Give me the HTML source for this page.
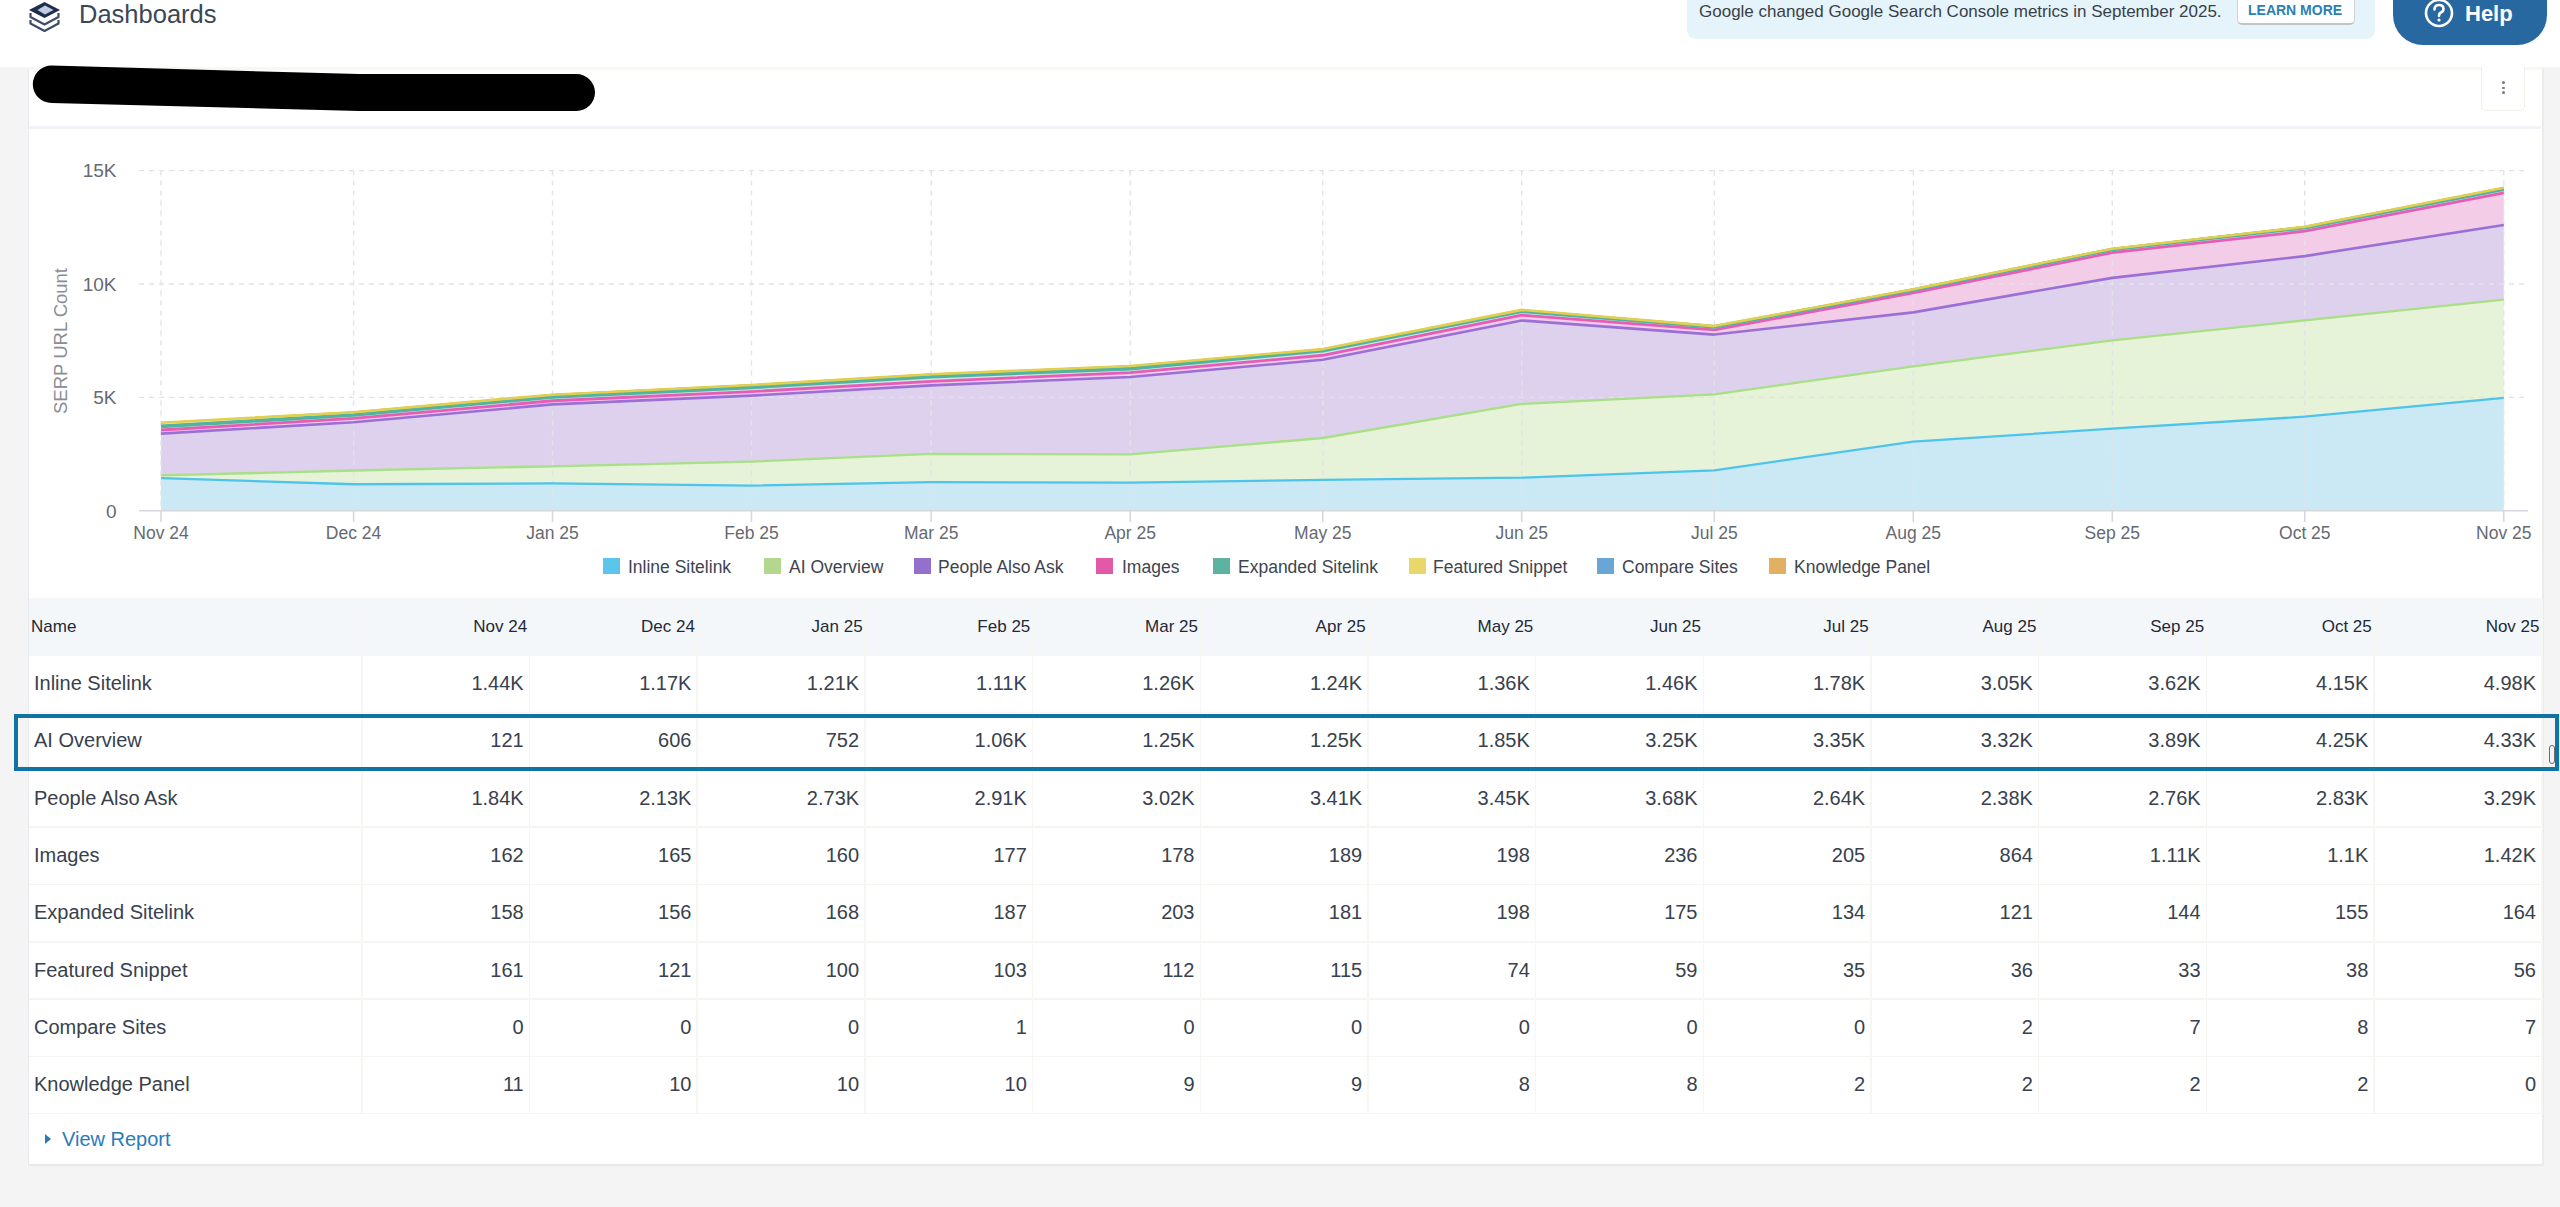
<!DOCTYPE html>
<html><head><meta charset="utf-8"><style>
html,body{margin:0;padding:0}
body{width:2560px;height:1207px;overflow:hidden;background:#f4f4f4;position:relative;font-family:"Liberation Sans",sans-serif;color:#333}
.abs{position:absolute}
#hdr{position:absolute;left:0;top:0;width:2560px;height:67px;background:#fff}
#title{position:absolute;left:79px;top:-3px;font-size:25.5px;line-height:34px;color:#3b4656}
#banner{position:absolute;left:1687px;top:-12px;width:688px;height:51px;background:#e5f3fa;border-radius:9px}
#btxt{position:absolute;left:1699px;top:0px;font-size:17px;line-height:24px;color:#3a3f47;white-space:nowrap}
#learn{position:absolute;left:2237px;top:-6px;width:118px;height:30.5px;background:#fff;border:1px solid #cfd3d8;border-bottom:2px solid #c4c4c4;border-radius:5px;box-sizing:border-box}
#learntxt{position:absolute;left:2248px;top:1px;font-size:14px;line-height:18px;font-weight:bold;color:#2a7fb5;white-space:nowrap}
#help{position:absolute;left:2393px;top:-30px;width:154px;height:75px;background:#2868a0;border-radius:30px}
#helptxt{position:absolute;left:2465px;top:0px;font-size:22px;line-height:28px;font-weight:bold;color:#fff}
#card{position:absolute;left:28px;top:67px;width:2516px;height:1099px;background:#fff;box-sizing:border-box;border:1.5px solid #e9e9f0;border-top:3px solid #f8f8f0;border-right:2px solid #ebebeb;border-bottom:2px solid #e8e8e8}
#sep{position:absolute;left:29px;top:126px;width:2512px;height:3px;background:#f3f3f9}
#kebab{position:absolute;left:2481px;top:67px;width:44px;height:44px;box-sizing:border-box;border:1.5px solid #f0f0ea;border-top:none;border-radius:0 0 5px 5px;background:#fff}
.dot{position:absolute;left:2502px;width:2.6px;height:2.6px;background:#7a7a7a;border-radius:2px}
.chart{position:absolute;left:0;top:0}
.sw{position:absolute;top:558px;width:17px;height:16px}
.lg{position:absolute;top:556px;font-size:17.5px;line-height:22px;color:#3d4450;white-space:nowrap}
.thead{position:absolute;left:29px;width:2512px;background:#f4f7fa;border-top:1.5px solid #f7f7f2;box-sizing:border-box}
.th{position:absolute;font-size:17px;color:#1f2937;white-space:nowrap}
.td{position:absolute;font-size:20px;line-height:54px;height:57px;color:#38414d;white-space:nowrap}
.r{text-align:right}
.rb{position:absolute;left:29px;width:2512px;height:1.5px;background:#f5f5f1}
.cl{position:absolute;width:1.5px;background:#f6f6f3}
#hl{position:absolute;left:14px;top:714px;width:2545px;height:57px;box-sizing:border-box;border:4px solid #0f73a3}
#vr{position:absolute;left:62px;top:1125px;font-size:20px;line-height:28px;color:#2a7bb8}
</style></head><body>
<div id="hdr"></div>
<svg class="abs" style="left:20px;top:0px" width="50" height="40" viewBox="20 0 50 40">
  <path d="M29 10 L44.5 2 L60 10 L44.5 18 Z" fill="#1f2e4d"/>
  <path d="M45 5.5 L53.5 10 L45 14.5 L37.5 10 Z" fill="#c3cde0"/>
  <path d="M30.5 13 L30.5 17 L44.5 24.5 L58.5 17 L58.5 13" fill="none" stroke="#3f4c66" stroke-width="2.2" stroke-linejoin="round"/>
  <path d="M30.5 20 L30.5 23.5 L44.5 31 L58.5 23.5 L58.5 20" fill="none" stroke="#3f4c66" stroke-width="2.2" stroke-linejoin="round"/>
</svg>
<div id="title">Dashboards</div>
<div id="banner"></div>
<div id="btxt">Google changed Google Search Console metrics in September 2025.</div>
<div id="learn"></div>
<div id="learntxt">LEARN MORE</div>
<div id="help"></div>
<svg class="abs" style="left:2423px;top:-3px" width="32" height="32" viewBox="0 0 32 32">
  <circle cx="16" cy="16" r="13" fill="none" stroke="#fff" stroke-width="2.6"/>
  <path d="M11.5 12.5 Q11.5 8 16 8 Q20.5 8 20.5 12 Q20.5 14.5 17.5 15.8 Q16 16.5 16 19" fill="none" stroke="#fff" stroke-width="2.6" stroke-linecap="round"/>
  <circle cx="16" cy="23" r="1.6" fill="#fff"/>
</svg>
<div id="helptxt">Help</div>
<div id="card"></div>
<svg class="abs" style="left:0;top:0" width="620" height="130" viewBox="0 0 620 130">
  <path d="M51.5 65.6 L359 74 L576.5 74 A18.5 18.5 0 0 1 576.5 111 L359 111 L51.5 103 A18.7 18.7 0 0 1 51.5 65.6 Z" fill="#000"/>
</svg>
<div id="kebab"></div>
<div class="dot" style="top:81px"></div><div class="dot" style="top:86.5px"></div><div class="dot" style="top:91px"></div>
<div id="sep"></div>
<svg class="chart" width="2560" height="600" viewBox="0 0 2560 600">
<path d="M161.00,478.14 L353.56,484.26 L552.54,483.36 L751.51,485.63 L931.24,482.22 L1130.21,482.68 L1322.77,479.96 L1521.75,477.69 L1714.31,470.43 L1913.29,441.63 L2112.26,428.70 L2304.82,416.68 L2503.80,397.85 L2503.80,510.80 L2304.82,510.80 L2112.26,510.80 L1913.29,510.80 L1714.31,510.80 L1521.75,510.80 L1322.77,510.80 L1130.21,510.80 L931.24,510.80 L751.51,510.80 L552.54,510.80 L353.56,510.80 L161.00,510.80 Z" fill="#cbe9f4"/><path d="M161.00,475.40 L353.56,470.52 L552.54,466.30 L751.51,461.58 L931.24,453.87 L1130.21,454.33 L1322.77,438.00 L1521.75,403.98 L1714.31,394.45 L1913.29,366.33 L2112.26,340.47 L2304.82,320.29 L2503.80,299.65 L2503.80,397.85 L2304.82,416.68 L2112.26,428.70 L1913.29,441.63 L1714.31,470.43 L1521.75,477.69 L1322.77,479.96 L1130.21,482.68 L931.24,482.22 L751.51,485.63 L552.54,483.36 L353.56,484.26 L161.00,478.14 Z" fill="#e6f3d9"/><path d="M161.00,433.67 L353.56,422.21 L552.54,404.39 L751.51,395.59 L931.24,385.38 L1130.21,376.99 L1322.77,359.75 L1521.75,320.51 L1714.31,334.58 L1913.29,312.35 L2112.26,277.88 L2304.82,256.10 L2503.80,225.03 L2503.80,299.65 L2304.82,320.29 L2112.26,340.47 L1913.29,366.33 L1714.31,394.45 L1521.75,403.98 L1322.77,438.00 L1130.21,454.33 L931.24,453.87 L751.51,461.58 L552.54,466.30 L353.56,470.52 L161.00,475.40 Z" fill="#ddd1ed"/><path d="M161.00,429.99 L353.56,418.47 L552.54,400.76 L751.51,391.57 L931.24,381.34 L1130.21,372.70 L1322.77,355.26 L1521.75,315.16 L1714.31,329.93 L1913.29,292.75 L2112.26,252.70 L2304.82,231.16 L2503.80,192.83 L2503.80,225.03 L2304.82,256.10 L2112.26,277.88 L1913.29,312.35 L1714.31,334.58 L1521.75,320.51 L1322.77,359.75 L1130.21,376.99 L931.24,385.38 L751.51,395.59 L552.54,404.39 L353.56,422.21 L161.00,433.67 Z" fill="#f3cde7"/><path d="M161.00,426.41 L353.56,414.93 L552.54,396.95 L751.51,387.33 L931.24,376.74 L1130.21,368.60 L1322.77,350.77 L1521.75,311.19 L1714.31,326.89 L1913.29,290.01 L2112.26,249.44 L2304.82,227.64 L2503.80,189.11 L2503.80,192.83 L2304.82,231.16 L2112.26,252.70 L1913.29,292.75 L1714.31,329.93 L1521.75,315.16 L1322.77,355.26 L1130.21,372.70 L931.24,381.34 L751.51,391.57 L552.54,400.76 L353.56,418.47 L161.00,429.99 Z" fill="#cfe9e3"/><path d="M161.00,422.76 L353.56,412.19 L552.54,394.68 L751.51,384.99 L931.24,374.20 L1130.21,365.99 L1322.77,349.09 L1521.75,309.86 L1714.31,326.09 L1913.29,289.19 L2112.26,248.69 L2304.82,226.78 L2503.80,187.84 L2503.80,189.11 L2304.82,227.64 L2112.26,249.44 L1913.29,290.01 L1714.31,326.89 L1521.75,311.19 L1322.77,350.77 L1130.21,368.60 L931.24,376.74 L751.51,387.33 L552.54,396.95 L353.56,414.93 L161.00,426.41 Z" fill="#f7f0c8"/><path d="M161.00,422.76 L353.56,412.19 L552.54,394.68 L751.51,384.97 L931.24,374.20 L1130.21,365.99 L1322.77,349.09 L1521.75,309.86 L1714.31,326.09 L1913.29,289.15 L2112.26,248.53 L2304.82,226.60 L2503.80,187.68 L2503.80,187.84 L2304.82,226.78 L2112.26,248.69 L1913.29,289.19 L1714.31,326.09 L1521.75,309.86 L1322.77,349.09 L1130.21,365.99 L931.24,374.20 L751.51,384.99 L552.54,394.68 L353.56,412.19 L161.00,422.76 Z" fill="#d3e4f2"/><path d="M161.00,422.51 L353.56,411.96 L552.54,394.45 L751.51,384.74 L931.24,373.99 L1130.21,365.78 L1322.77,348.91 L1521.75,309.67 L1714.31,326.05 L1913.29,289.10 L2112.26,248.48 L2304.82,226.55 L2503.80,187.68 L2503.80,187.68 L2304.82,226.60 L2112.26,248.53 L1913.29,289.15 L1714.31,326.09 L1521.75,309.86 L1322.77,349.09 L1130.21,365.99 L931.24,374.20 L751.51,384.97 L552.54,394.68 L353.56,412.19 L161.00,422.76 Z" fill="#f6e6cc"/>
<line x1="139" y1="397.4" x2="2528" y2="397.4" stroke="#e2e3e7" stroke-width="1.4" stroke-dasharray="5,5"/><line x1="139" y1="284.0" x2="2528" y2="284.0" stroke="#e2e3e7" stroke-width="1.4" stroke-dasharray="5,5"/><line x1="139" y1="170.6" x2="2528" y2="170.6" stroke="#e2e3e7" stroke-width="1.4" stroke-dasharray="5,5"/><line x1="161.0" y1="170.6" x2="161.0" y2="510.8" stroke="#e2e3e7" stroke-width="1.4" stroke-dasharray="5,5"/><line x1="353.6" y1="170.6" x2="353.6" y2="510.8" stroke="#e2e3e7" stroke-width="1.4" stroke-dasharray="5,5"/><line x1="552.5" y1="170.6" x2="552.5" y2="510.8" stroke="#e2e3e7" stroke-width="1.4" stroke-dasharray="5,5"/><line x1="751.5" y1="170.6" x2="751.5" y2="510.8" stroke="#e2e3e7" stroke-width="1.4" stroke-dasharray="5,5"/><line x1="931.2" y1="170.6" x2="931.2" y2="510.8" stroke="#e2e3e7" stroke-width="1.4" stroke-dasharray="5,5"/><line x1="1130.2" y1="170.6" x2="1130.2" y2="510.8" stroke="#e2e3e7" stroke-width="1.4" stroke-dasharray="5,5"/><line x1="1322.8" y1="170.6" x2="1322.8" y2="510.8" stroke="#e2e3e7" stroke-width="1.4" stroke-dasharray="5,5"/><line x1="1521.7" y1="170.6" x2="1521.7" y2="510.8" stroke="#e2e3e7" stroke-width="1.4" stroke-dasharray="5,5"/><line x1="1714.3" y1="170.6" x2="1714.3" y2="510.8" stroke="#e2e3e7" stroke-width="1.4" stroke-dasharray="5,5"/><line x1="1913.3" y1="170.6" x2="1913.3" y2="510.8" stroke="#e2e3e7" stroke-width="1.4" stroke-dasharray="5,5"/><line x1="2112.3" y1="170.6" x2="2112.3" y2="510.8" stroke="#e2e3e7" stroke-width="1.4" stroke-dasharray="5,5"/><line x1="2304.8" y1="170.6" x2="2304.8" y2="510.8" stroke="#e2e3e7" stroke-width="1.4" stroke-dasharray="5,5"/><line x1="2503.8" y1="170.6" x2="2503.8" y2="510.8" stroke="#e2e3e7" stroke-width="1.4" stroke-dasharray="5,5"/>
<path d="M161.00,422.51 L353.56,411.96 L552.54,394.45 L751.51,384.74 L931.24,373.99 L1130.21,365.78 L1322.77,348.91 L1521.75,309.67 L1714.31,326.05 L1913.29,289.10 L2112.26,248.48 L2304.82,226.55 L2503.80,187.68" fill="none" stroke="#e0aa55" stroke-width="1.2" stroke-linejoin="round"/><path d="M161.00,422.76 L353.56,412.19 L552.54,394.68 L751.51,384.97 L931.24,374.20 L1130.21,365.99 L1322.77,349.09 L1521.75,309.86 L1714.31,326.09 L1913.29,289.15 L2112.26,248.53 L2304.82,226.60 L2503.80,187.68" fill="none" stroke="#5f9fd6" stroke-width="1.2" stroke-linejoin="round"/><path d="M161.00,478.14 L353.56,484.26 L552.54,483.36 L751.51,485.63 L931.24,482.22 L1130.21,482.68 L1322.77,479.96 L1521.75,477.69 L1714.31,470.43 L1913.29,441.63 L2112.26,428.70 L2304.82,416.68 L2503.80,397.85" fill="none" stroke="#4ec3ee" stroke-width="2.3" stroke-linejoin="round"/><path d="M161.00,475.40 L353.56,470.52 L552.54,466.30 L751.51,461.58 L931.24,453.87 L1130.21,454.33 L1322.77,438.00 L1521.75,403.98 L1714.31,394.45 L1913.29,366.33 L2112.26,340.47 L2304.82,320.29 L2503.80,299.65" fill="none" stroke="#a9df86" stroke-width="2.3" stroke-linejoin="round"/><path d="M161.00,433.67 L353.56,422.21 L552.54,404.39 L751.51,395.59 L931.24,385.38 L1130.21,376.99 L1322.77,359.75 L1521.75,320.51 L1714.31,334.58 L1913.29,312.35 L2112.26,277.88 L2304.82,256.10 L2503.80,225.03" fill="none" stroke="#9b6fd6" stroke-width="2.6" stroke-linejoin="round"/><path d="M161.00,429.99 L353.56,418.47 L552.54,400.76 L751.51,391.57 L931.24,381.34 L1130.21,372.70 L1322.77,355.26 L1521.75,315.16 L1714.31,329.93 L1913.29,292.75 L2112.26,252.70 L2304.82,231.16 L2503.80,192.83" fill="none" stroke="#e85cb8" stroke-width="2.8" stroke-linejoin="round"/><path d="M161.00,426.41 L353.56,414.93 L552.54,396.95 L751.51,387.33 L931.24,376.74 L1130.21,368.60 L1322.77,350.77 L1521.75,311.19 L1714.31,326.89 L1913.29,290.01 L2112.26,249.44 L2304.82,227.64 L2503.80,189.11" fill="none" stroke="#52b3a0" stroke-width="3.6" stroke-linejoin="round"/><path d="M161.00,422.76 L353.56,412.19 L552.54,394.68 L751.51,384.99 L931.24,374.20 L1130.21,365.99 L1322.77,349.09 L1521.75,309.86 L1714.31,326.09 L1913.29,289.19 L2112.26,248.69 L2304.82,226.78 L2503.80,187.84" fill="none" stroke="#e3cf4f" stroke-width="2.6" stroke-linejoin="round"/>
<line x1="139" y1="510.8" x2="2528" y2="510.8" stroke="#d6d7dc" stroke-width="1.5"/><line x1="161.0" y1="510.8" x2="161.0" y2="522" stroke="#d6d7dc" stroke-width="1.5"/><line x1="353.6" y1="510.8" x2="353.6" y2="522" stroke="#d6d7dc" stroke-width="1.5"/><line x1="552.5" y1="510.8" x2="552.5" y2="522" stroke="#d6d7dc" stroke-width="1.5"/><line x1="751.5" y1="510.8" x2="751.5" y2="522" stroke="#d6d7dc" stroke-width="1.5"/><line x1="931.2" y1="510.8" x2="931.2" y2="522" stroke="#d6d7dc" stroke-width="1.5"/><line x1="1130.2" y1="510.8" x2="1130.2" y2="522" stroke="#d6d7dc" stroke-width="1.5"/><line x1="1322.8" y1="510.8" x2="1322.8" y2="522" stroke="#d6d7dc" stroke-width="1.5"/><line x1="1521.7" y1="510.8" x2="1521.7" y2="522" stroke="#d6d7dc" stroke-width="1.5"/><line x1="1714.3" y1="510.8" x2="1714.3" y2="522" stroke="#d6d7dc" stroke-width="1.5"/><line x1="1913.3" y1="510.8" x2="1913.3" y2="522" stroke="#d6d7dc" stroke-width="1.5"/><line x1="2112.3" y1="510.8" x2="2112.3" y2="522" stroke="#d6d7dc" stroke-width="1.5"/><line x1="2304.8" y1="510.8" x2="2304.8" y2="522" stroke="#d6d7dc" stroke-width="1.5"/><line x1="2503.8" y1="510.8" x2="2503.8" y2="522" stroke="#d6d7dc" stroke-width="1.5"/>
<g font-family="Liberation Sans, sans-serif" font-size="19" fill="#666a70"><text x="116.5" y="517.6" text-anchor="end">0</text><text x="116.5" y="404.2" text-anchor="end">5K</text><text x="116.5" y="290.8" text-anchor="end">10K</text><text x="116.5" y="177.4" text-anchor="end">15K</text></g>
<g font-family="Liberation Sans, sans-serif" font-size="17.5" fill="#666a70"><text x="161.0" y="539" text-anchor="middle">Nov 24</text><text x="353.6" y="539" text-anchor="middle">Dec 24</text><text x="552.5" y="539" text-anchor="middle">Jan 25</text><text x="751.5" y="539" text-anchor="middle">Feb 25</text><text x="931.2" y="539" text-anchor="middle">Mar 25</text><text x="1130.2" y="539" text-anchor="middle">Apr 25</text><text x="1322.8" y="539" text-anchor="middle">May 25</text><text x="1521.7" y="539" text-anchor="middle">Jun 25</text><text x="1714.3" y="539" text-anchor="middle">Jul 25</text><text x="1913.3" y="539" text-anchor="middle">Aug 25</text><text x="2112.3" y="539" text-anchor="middle">Sep 25</text><text x="2304.8" y="539" text-anchor="middle">Oct 25</text><text x="2503.8" y="539" text-anchor="middle">Nov 25</text></g>
<text transform="translate(67,341) rotate(-90)" text-anchor="middle" font-family="Liberation Sans, sans-serif" font-size="18.5" fill="#8a8d93">SERP URL Count</text>
</svg>
<div class="sw" style="left:603px;background:#5cc6ea"></div><div class="lg" style="left:628px">Inline Sitelink</div><div class="sw" style="left:764px;background:#b3d78f"></div><div class="lg" style="left:789px">AI Overview</div><div class="sw" style="left:914px;background:#9370cc"></div><div class="lg" style="left:938px">People Also Ask</div><div class="sw" style="left:1096px;background:#e05aa8"></div><div class="lg" style="left:1122px">Images</div><div class="sw" style="left:1213px;background:#5ab4a0"></div><div class="lg" style="left:1238px">Expanded Sitelink</div><div class="sw" style="left:1409px;background:#e8d86c"></div><div class="lg" style="left:1433px">Featured Snippet</div><div class="sw" style="left:1597px;background:#6aa6d4"></div><div class="lg" style="left:1622px">Compare Sites</div><div class="sw" style="left:1769px;background:#e2b062"></div><div class="lg" style="left:1794px">Knowledge Panel</div>
<div class="thead" style="top:597.5px;height:58.5px"></div><div class="th" style="left:31px;top:597.5px;height:58.5px;line-height:58.5px">Name</div><div class="th r" style="left:369.7px;top:597.5px;height:58.5px;line-height:58.5px;width:157.5px">Nov 24</div><div class="th r" style="left:537.4px;top:597.5px;height:58.5px;line-height:58.5px;width:157.5px">Dec 24</div><div class="th r" style="left:705.1px;top:597.5px;height:58.5px;line-height:58.5px;width:157.5px">Jan 25</div><div class="th r" style="left:872.8px;top:597.5px;height:58.5px;line-height:58.5px;width:157.5px">Feb 25</div><div class="th r" style="left:1040.5px;top:597.5px;height:58.5px;line-height:58.5px;width:157.5px">Mar 25</div><div class="th r" style="left:1208.2px;top:597.5px;height:58.5px;line-height:58.5px;width:157.5px">Apr 25</div><div class="th r" style="left:1375.8px;top:597.5px;height:58.5px;line-height:58.5px;width:157.5px">May 25</div><div class="th r" style="left:1543.5px;top:597.5px;height:58.5px;line-height:58.5px;width:157.5px">Jun 25</div><div class="th r" style="left:1711.2px;top:597.5px;height:58.5px;line-height:58.5px;width:157.5px">Jul 25</div><div class="th r" style="left:1878.9px;top:597.5px;height:58.5px;line-height:58.5px;width:157.5px">Aug 25</div><div class="th r" style="left:2046.6px;top:597.5px;height:58.5px;line-height:58.5px;width:157.5px">Sep 25</div><div class="th r" style="left:2214.3px;top:597.5px;height:58.5px;line-height:58.5px;width:157.5px">Oct 25</div><div class="th r" style="left:2382.0px;top:597.5px;height:58.5px;line-height:58.5px;width:157.5px">Nov 25</div><div class="td" style="left:34px;top:656.0px">Inline Sitelink</div><div class="td r" style="left:369.7px;top:656.0px;width:154px">1.44K</div><div class="td r" style="left:537.4px;top:656.0px;width:154px">1.17K</div><div class="td r" style="left:705.1px;top:656.0px;width:154px">1.21K</div><div class="td r" style="left:872.8px;top:656.0px;width:154px">1.11K</div><div class="td r" style="left:1040.5px;top:656.0px;width:154px">1.26K</div><div class="td r" style="left:1208.2px;top:656.0px;width:154px">1.24K</div><div class="td r" style="left:1375.8px;top:656.0px;width:154px">1.36K</div><div class="td r" style="left:1543.5px;top:656.0px;width:154px">1.46K</div><div class="td r" style="left:1711.2px;top:656.0px;width:154px">1.78K</div><div class="td r" style="left:1878.9px;top:656.0px;width:154px">3.05K</div><div class="td r" style="left:2046.6px;top:656.0px;width:154px">3.62K</div><div class="td r" style="left:2214.3px;top:656.0px;width:154px">4.15K</div><div class="td r" style="left:2382.0px;top:656.0px;width:154px">4.98K</div><div class="rb" style="top:711.8px"></div><div class="td" style="left:34px;top:713.3px">AI Overview</div><div class="td r" style="left:369.7px;top:713.3px;width:154px">121</div><div class="td r" style="left:537.4px;top:713.3px;width:154px">606</div><div class="td r" style="left:705.1px;top:713.3px;width:154px">752</div><div class="td r" style="left:872.8px;top:713.3px;width:154px">1.06K</div><div class="td r" style="left:1040.5px;top:713.3px;width:154px">1.25K</div><div class="td r" style="left:1208.2px;top:713.3px;width:154px">1.25K</div><div class="td r" style="left:1375.8px;top:713.3px;width:154px">1.85K</div><div class="td r" style="left:1543.5px;top:713.3px;width:154px">3.25K</div><div class="td r" style="left:1711.2px;top:713.3px;width:154px">3.35K</div><div class="td r" style="left:1878.9px;top:713.3px;width:154px">3.32K</div><div class="td r" style="left:2046.6px;top:713.3px;width:154px">3.89K</div><div class="td r" style="left:2214.3px;top:713.3px;width:154px">4.25K</div><div class="td r" style="left:2382.0px;top:713.3px;width:154px">4.33K</div><div class="rb" style="top:769.1px"></div><div class="td" style="left:34px;top:770.6px">People Also Ask</div><div class="td r" style="left:369.7px;top:770.6px;width:154px">1.84K</div><div class="td r" style="left:537.4px;top:770.6px;width:154px">2.13K</div><div class="td r" style="left:705.1px;top:770.6px;width:154px">2.73K</div><div class="td r" style="left:872.8px;top:770.6px;width:154px">2.91K</div><div class="td r" style="left:1040.5px;top:770.6px;width:154px">3.02K</div><div class="td r" style="left:1208.2px;top:770.6px;width:154px">3.41K</div><div class="td r" style="left:1375.8px;top:770.6px;width:154px">3.45K</div><div class="td r" style="left:1543.5px;top:770.6px;width:154px">3.68K</div><div class="td r" style="left:1711.2px;top:770.6px;width:154px">2.64K</div><div class="td r" style="left:1878.9px;top:770.6px;width:154px">2.38K</div><div class="td r" style="left:2046.6px;top:770.6px;width:154px">2.76K</div><div class="td r" style="left:2214.3px;top:770.6px;width:154px">2.83K</div><div class="td r" style="left:2382.0px;top:770.6px;width:154px">3.29K</div><div class="rb" style="top:826.4px"></div><div class="td" style="left:34px;top:827.9px">Images</div><div class="td r" style="left:369.7px;top:827.9px;width:154px">162</div><div class="td r" style="left:537.4px;top:827.9px;width:154px">165</div><div class="td r" style="left:705.1px;top:827.9px;width:154px">160</div><div class="td r" style="left:872.8px;top:827.9px;width:154px">177</div><div class="td r" style="left:1040.5px;top:827.9px;width:154px">178</div><div class="td r" style="left:1208.2px;top:827.9px;width:154px">189</div><div class="td r" style="left:1375.8px;top:827.9px;width:154px">198</div><div class="td r" style="left:1543.5px;top:827.9px;width:154px">236</div><div class="td r" style="left:1711.2px;top:827.9px;width:154px">205</div><div class="td r" style="left:1878.9px;top:827.9px;width:154px">864</div><div class="td r" style="left:2046.6px;top:827.9px;width:154px">1.11K</div><div class="td r" style="left:2214.3px;top:827.9px;width:154px">1.1K</div><div class="td r" style="left:2382.0px;top:827.9px;width:154px">1.42K</div><div class="rb" style="top:883.7px"></div><div class="td" style="left:34px;top:885.2px">Expanded Sitelink</div><div class="td r" style="left:369.7px;top:885.2px;width:154px">158</div><div class="td r" style="left:537.4px;top:885.2px;width:154px">156</div><div class="td r" style="left:705.1px;top:885.2px;width:154px">168</div><div class="td r" style="left:872.8px;top:885.2px;width:154px">187</div><div class="td r" style="left:1040.5px;top:885.2px;width:154px">203</div><div class="td r" style="left:1208.2px;top:885.2px;width:154px">181</div><div class="td r" style="left:1375.8px;top:885.2px;width:154px">198</div><div class="td r" style="left:1543.5px;top:885.2px;width:154px">175</div><div class="td r" style="left:1711.2px;top:885.2px;width:154px">134</div><div class="td r" style="left:1878.9px;top:885.2px;width:154px">121</div><div class="td r" style="left:2046.6px;top:885.2px;width:154px">144</div><div class="td r" style="left:2214.3px;top:885.2px;width:154px">155</div><div class="td r" style="left:2382.0px;top:885.2px;width:154px">164</div><div class="rb" style="top:941.0px"></div><div class="td" style="left:34px;top:942.5px">Featured Snippet</div><div class="td r" style="left:369.7px;top:942.5px;width:154px">161</div><div class="td r" style="left:537.4px;top:942.5px;width:154px">121</div><div class="td r" style="left:705.1px;top:942.5px;width:154px">100</div><div class="td r" style="left:872.8px;top:942.5px;width:154px">103</div><div class="td r" style="left:1040.5px;top:942.5px;width:154px">112</div><div class="td r" style="left:1208.2px;top:942.5px;width:154px">115</div><div class="td r" style="left:1375.8px;top:942.5px;width:154px">74</div><div class="td r" style="left:1543.5px;top:942.5px;width:154px">59</div><div class="td r" style="left:1711.2px;top:942.5px;width:154px">35</div><div class="td r" style="left:1878.9px;top:942.5px;width:154px">36</div><div class="td r" style="left:2046.6px;top:942.5px;width:154px">33</div><div class="td r" style="left:2214.3px;top:942.5px;width:154px">38</div><div class="td r" style="left:2382.0px;top:942.5px;width:154px">56</div><div class="rb" style="top:998.3px"></div><div class="td" style="left:34px;top:999.8px">Compare Sites</div><div class="td r" style="left:369.7px;top:999.8px;width:154px">0</div><div class="td r" style="left:537.4px;top:999.8px;width:154px">0</div><div class="td r" style="left:705.1px;top:999.8px;width:154px">0</div><div class="td r" style="left:872.8px;top:999.8px;width:154px">1</div><div class="td r" style="left:1040.5px;top:999.8px;width:154px">0</div><div class="td r" style="left:1208.2px;top:999.8px;width:154px">0</div><div class="td r" style="left:1375.8px;top:999.8px;width:154px">0</div><div class="td r" style="left:1543.5px;top:999.8px;width:154px">0</div><div class="td r" style="left:1711.2px;top:999.8px;width:154px">0</div><div class="td r" style="left:1878.9px;top:999.8px;width:154px">2</div><div class="td r" style="left:2046.6px;top:999.8px;width:154px">7</div><div class="td r" style="left:2214.3px;top:999.8px;width:154px">8</div><div class="td r" style="left:2382.0px;top:999.8px;width:154px">7</div><div class="rb" style="top:1055.6px"></div><div class="td" style="left:34px;top:1057.1px">Knowledge Panel</div><div class="td r" style="left:369.7px;top:1057.1px;width:154px">11</div><div class="td r" style="left:537.4px;top:1057.1px;width:154px">10</div><div class="td r" style="left:705.1px;top:1057.1px;width:154px">10</div><div class="td r" style="left:872.8px;top:1057.1px;width:154px">10</div><div class="td r" style="left:1040.5px;top:1057.1px;width:154px">9</div><div class="td r" style="left:1208.2px;top:1057.1px;width:154px">9</div><div class="td r" style="left:1375.8px;top:1057.1px;width:154px">8</div><div class="td r" style="left:1543.5px;top:1057.1px;width:154px">8</div><div class="td r" style="left:1711.2px;top:1057.1px;width:154px">2</div><div class="td r" style="left:1878.9px;top:1057.1px;width:154px">2</div><div class="td r" style="left:2046.6px;top:1057.1px;width:154px">2</div><div class="td r" style="left:2214.3px;top:1057.1px;width:154px">2</div><div class="td r" style="left:2382.0px;top:1057.1px;width:154px">0</div><div class="rb" style="top:1112.9px"></div><div class="cl" style="left:361.0px;top:597.5px;height:516.9px"></div><div class="cl" style="left:528.7px;top:597.5px;height:516.9px"></div><div class="cl" style="left:696.4px;top:597.5px;height:516.9px"></div><div class="cl" style="left:864.1px;top:597.5px;height:516.9px"></div><div class="cl" style="left:1031.8px;top:597.5px;height:516.9px"></div><div class="cl" style="left:1199.5px;top:597.5px;height:516.9px"></div><div class="cl" style="left:1367.2px;top:597.5px;height:516.9px"></div><div class="cl" style="left:1534.8px;top:597.5px;height:516.9px"></div><div class="cl" style="left:1702.5px;top:597.5px;height:516.9px"></div><div class="cl" style="left:1870.2px;top:597.5px;height:516.9px"></div><div class="cl" style="left:2037.9px;top:597.5px;height:516.9px"></div><div class="cl" style="left:2205.6px;top:597.5px;height:516.9px"></div><div class="cl" style="left:2373.3px;top:597.5px;height:516.9px"></div><div class="cl" style="left:2541.0px;top:597.5px;height:516.9px"></div>
<div id="hl"></div>
<svg class="abs" style="left:43px;top:1133px" width="10" height="12" viewBox="0 0 10 12"><path d="M2 1 L8 6 L2 11 Z" fill="#2a7bb8"/></svg>
<div id="vr">View Report</div>
<div style="position:absolute;left:2549px;top:745px;width:6px;height:19px;box-sizing:border-box;border:1.5px solid #6a6a6a;border-radius:3px"></div>
</body></html>
